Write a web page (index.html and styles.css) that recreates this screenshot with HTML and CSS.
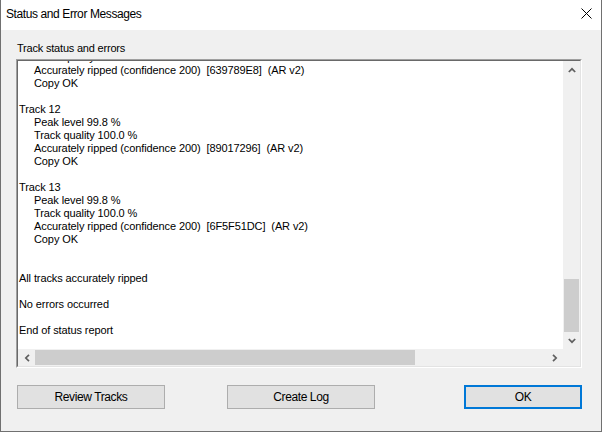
FILE: index.html
```html
<!DOCTYPE html>
<html>
<head>
<meta charset="utf-8">
<link rel="stylesheet" href="styles.css">
</head>
<body>
<div class="dialog">
  <div class="titlebar">
    <span class="title">Status and Error Messages</span>
    <svg class="close" width="11" height="11" viewBox="0 0 11 11"><path d="M0.5 0.5 L10.5 10.5 M10.5 0.5 L0.5 10.5" stroke="#000" stroke-width="1" fill="none"/></svg>
  </div>
  <div class="body">
    <div class="label">Track status and errors</div>
    <div class="listbox">
      <div class="listinner">
        <div class="listmain">
          <div class="viewport">
            <div class="lines">
              <div class="ln ind">Track quality 100.0 %</div>
              <div class="ln ind">Accurately ripped (confidence 200)  [639789E8]  (AR v2)</div>
              <div class="ln ind">Copy OK</div>
              <div class="ln"></div>
              <div class="ln">Track 12</div>
              <div class="ln ind">Peak level 99.8 %</div>
              <div class="ln ind">Track quality 100.0 %</div>
              <div class="ln ind">Accurately ripped (confidence 200)  [89017296]  (AR v2)</div>
              <div class="ln ind">Copy OK</div>
              <div class="ln"></div>
              <div class="ln">Track 13</div>
              <div class="ln ind">Peak level 99.8 %</div>
              <div class="ln ind">Track quality 100.0 %</div>
              <div class="ln ind">Accurately ripped (confidence 200)  [6F5F51DC]  (AR v2)</div>
              <div class="ln ind">Copy OK</div>
              <div class="ln"></div>
              <div class="ln"></div>
              <div class="ln">All tracks accurately ripped</div>
              <div class="ln"></div>
              <div class="ln">No errors occurred</div>
              <div class="ln"></div>
              <div class="ln">End of status report</div>
              <div class="ln"></div>
            </div>
          </div>
          <div class="vscroll">
            <div class="arrow"><svg width="8" height="6" viewBox="0 0 8 6"><path d="M0.8 5 L4 1.8 L7.2 5" stroke="#606060" stroke-width="1.7" fill="none"/></svg></div>
            <div class="vtrack"><div class="vthumb"></div></div>
            <div class="arrow"><svg width="8" height="6" viewBox="0 0 8 6"><path d="M0.8 1 L4 4.2 L7.2 1" stroke="#606060" stroke-width="1.7" fill="none"/></svg></div>
          </div>
        </div>
        <div class="hrow">
          <div class="hscroll">
            <div class="arrow"><svg width="6" height="8" viewBox="0 0 6 8"><path d="M5 0.8 L1.8 4 L5 7.2" stroke="#606060" stroke-width="1.7" fill="none"/></svg></div>
            <div class="htrack"><div class="hthumb"></div></div>
            <div class="arrow"><svg width="6" height="8" viewBox="0 0 6 8"><path d="M1 0.8 L4.2 4 L1 7.2" stroke="#606060" stroke-width="1.7" fill="none"/></svg></div>
          </div>
          <div class="corner"></div>
        </div>
      </div>
    </div>
    <div class="buttons">
      <div class="btn btn-review">Review Tracks</div>
      <div class="btn btn-log">Create Log</div>
      <div class="btn btn-ok">OK</div>
    </div>
  </div>
</div>
</body>
</html>
```
FILE: styles.css
```css
html, body {
  margin: 0;
  padding: 0;
  background: #f0f0f0;
}
.dialog {
  width: 602px;
  height: 432px;
  box-sizing: border-box;
  border: 1px solid #707070;
  border-top: none;
  display: flex;
  flex-direction: column;
  font-family: "Liberation Sans", Arial, sans-serif;
  font-size: 11px;
  color: #000;
}
.titlebar {
  height: 30px;
  flex: none;
  background: #fff;
  display: flex;
  align-items: center;
  padding-left: 5px;
}
.title {
  font-size: 12px;
  letter-spacing: -0.4px;
  flex: 1;
  padding-bottom: 2px;
}
.close {
  margin-right: 9px;
  margin-bottom: 4px;
}
.body {
  flex: 1;
  background: #f0f0f0;
  padding: 12px 0 0 15px;
  display: flex;
  flex-direction: column;
}
.label {
  line-height: 13px;
  height: 13px;
  padding-left: 1px;
  letter-spacing: -0.2px;
}
.listbox {
  margin-top: 4px;
  width: 566px;
  height: 309px;
  box-sizing: border-box;
  border: 1px solid;
  border-color: #a0a0a0 #ffffff #ffffff #a0a0a0;
}
.listinner {
  height: 100%;
  box-sizing: border-box;
  border: 1px solid;
  border-color: #696969 #e3e3e3 #e3e3e3 #696969;
  display: flex;
  flex-direction: column;
}
.listmain {
  flex: 1;
  display: flex;
  min-height: 0;
}
.viewport {
  flex: 1;
  background: #fff;
  overflow: hidden;
}
.lines {
  margin-top: -10px;
  padding-left: 1px;
  letter-spacing: -0.1px;
}
.ln {
  height: 13px;
  line-height: 13px;
  white-space: pre;
}
.ind {
  padding-left: 15px;
}
.vscroll {
  width: 17px;
  background: #f0f0f0;
  display: flex;
  flex-direction: column;
}
.arrow {
  width: 17px;
  height: 17px;
  flex: none;
  display: flex;
  align-items: center;
  justify-content: center;
}
.vtrack {
  flex: 1;
  display: flex;
  flex-direction: column;
  justify-content: flex-end;
  padding: 0 1px;
}
.vthumb {
  height: 53px;
  background: #cdcdcd;
}
.hrow {
  height: 17px;
  display: flex;
  flex: none;
}
.hscroll {
  flex: 1;
  display: flex;
  background: #f0f0f0;
}
.htrack {
  flex: 1;
  padding: 1px 0;
  display: flex;
}
.hthumb {
  width: 380px;
  background: #cdcdcd;
}
.corner {
  width: 17px;
  background: #f0f0f0;
}
.buttons {
  margin-top: 17px;
  display: flex;
  padding-left: 1px;
}
.btn {
  height: 24px;
  box-sizing: border-box;
  border: 1px solid #adadad;
  background: #e1e1e1;
  display: flex;
  align-items: center;
  justify-content: center;
  font-size: 12px;
  letter-spacing: -0.4px;
}
.btn-review {
  width: 148px;
}
.btn-log {
  width: 148px;
  margin-left: 62px;
}
.btn-ok {
  width: 118px;
  margin-left: 89px;
  border: 2px solid #0078d7;
}
```
